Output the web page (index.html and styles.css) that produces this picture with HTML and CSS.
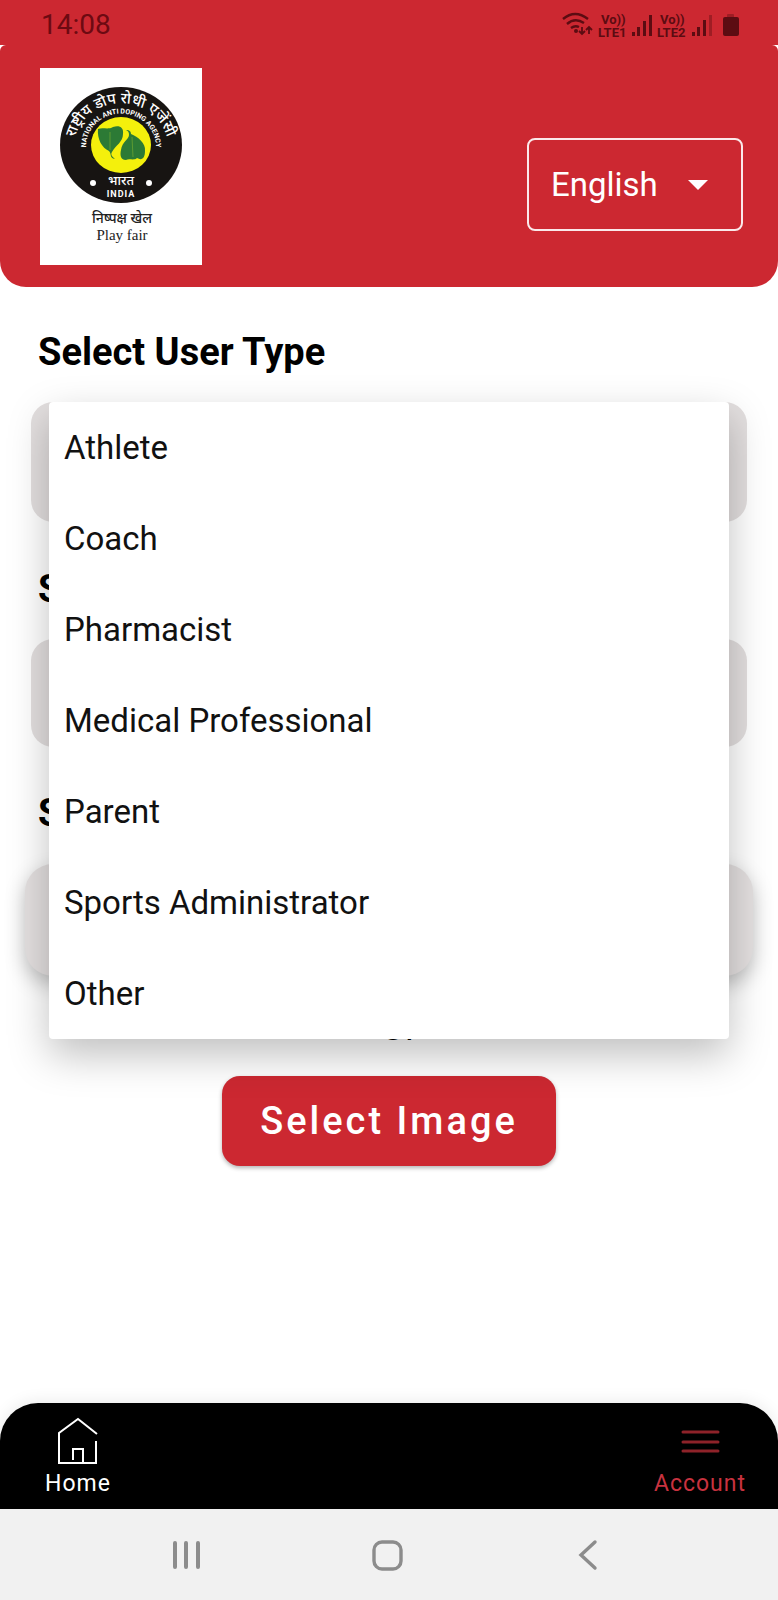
FILE: index.html
```html
<!DOCTYPE html>
<html lang="en">
<head>
    <meta charset="UTF-8">
    <meta name="viewport" content="width=device-width, initial-scale=1.0">
    <title>Select User Type</title>
    <link rel="stylesheet" href="styles.css">
</head>
<body>
    <!-- Status bar -->
    <div class="status-bar">
        <span class="time">14:08</span>
        <svg class="status-icons" width="180" height="28" viewBox="0 0 180 28">
            <g fill="none" stroke="#5c0c12" stroke-width="2.4">
                <path d="M1 8 Q13 -2 26 8"/>
                <path d="M5 13 Q13 6 22 12"/>
                <path d="M9 17 Q13 14 17 16"/>
            </g>
            <circle cx="14" cy="20" r="2" fill="#5c0c12"/>
            <path d="M20 16v7M17 20l3 3 3-3M27 23v-7M24 19l3-3 3 3" fill="none" stroke="#5c0c12" stroke-width="1.8"/>
            <g class="lte">
                <text x="39" y="13">Vo))</text>
                <text x="36" y="26">LTE1</text>
                <text x="98" y="13">Vo))</text>
                <text x="95" y="26">LTE2</text>
            </g>
            <g fill="#5c0c12">
                <rect x="70" y="21" width="3" height="4"/>
                <rect x="75" y="16" width="3" height="9"/>
                <rect x="81" y="10" width="3" height="15"/>
                <rect x="87" y="4" width="3" height="21"/>
                <rect x="130" y="21" width="3" height="4"/>
                <rect x="135" y="16" width="3" height="9"/>
                <rect x="141" y="9" width="3" height="16"/>
                <rect x="147" y="4" width="3" height="21" opacity=".4"/>
                <rect x="165" y="3" width="7" height="5" rx="1" opacity=".4"/>
                <rect x="161" y="6" width="16" height="19" rx="2"/>
            </g>
        </svg>
    </div>

    <!-- Header -->
    <header class="header">
        <svg class="logo" width="162" height="197" viewBox="0 0 162 197" role="img" aria-label="National Anti Doping Agency India">
            <defs>
                <path id="ringOuter" d="M36 92 A47 44 0 1 1 126 92"/>
                <path id="ringInner" d="M49 92 A35 33 0 1 1 113 92"/>
            </defs>
            <rect width="162" height="197" fill="#fff"/>
            <ellipse cx="81" cy="77" rx="61" ry="58" fill="#171412"/>
            <ellipse cx="81" cy="77" rx="30" ry="28" fill="#f4f00c"/>
            <path d="M58 61 C63 59 68 62 73 59 C79 57 84 59 83 66 C83 74 76 77 72 84 C70 87 73 89 75 91 C69 90 72 86 69 83 C62 80 57 71 58 61Z" fill="#2c7a35"/>
            <path d="M86 62 C90 62 91 64 91 66 C98 69 106 75 105 83 C105 90 102 93 97 90 C94 93 89 90 86 92 C80 92 80 86 81 82 C82 74 89 71 89 67 C89 64 88 63 86 62Z" fill="#2c7a35"/>
            <path d="M70 64 L70 82 M92 69 L93 89" stroke="#5c9a32" stroke-width="1" fill="none"/>
            <text class="logo-hindi" text-anchor="middle"><textPath href="#ringOuter" startOffset="50%">राष्ट्रीय डोप रोधी एजेंसी</textPath></text>
            <text class="logo-ring" text-anchor="middle"><textPath href="#ringInner" startOffset="50%">NATIONAL ANTI DOPING AGENCY</textPath></text>
            <text class="logo-bharat" x="81" y="117" text-anchor="middle">भारत</text>
            <text class="logo-india" x="81" y="129" text-anchor="middle">INDIA</text>
            <circle cx="53" cy="115" r="3" fill="#fff"/>
            <circle cx="109" cy="115" r="3" fill="#fff"/>
            <text class="logo-motto" x="82" y="155" text-anchor="middle">निष्पक्ष खेल</text>
            <text class="logo-play" x="82" y="172" text-anchor="middle">Play fair</text>
        </svg>
        <div class="language">
            <select class="language-select" aria-label="Language">
                <option>English</option>
                <option>Hindi</option>
            </select>
            <svg class="caret" width="20" height="10" viewBox="0 0 20 10"><path d="M0 0h20L10 10z" fill="#fff"/></svg>
        </div>
    </header>

    <!-- Form -->
    <main class="content">
        <label class="label" for="userType">Select User Type</label>
        <div class="field-wrap">
            <select class="field field-tall" id="userType"></select>
            <!-- Opened list -->
            <div class="menu" role="listbox" aria-label="User type">
                <button class="menu-item" role="option">Athlete</button>
                <button class="menu-item" role="option">Coach</button>
                <button class="menu-item" role="option">Pharmacist</button>
                <button class="menu-item" role="option">Medical Professional</button>
                <button class="menu-item" role="option">Parent</button>
                <button class="menu-item" role="option">Sports Administrator</button>
                <button class="menu-item" role="option">Other</button>
            </div>
        </div>

        <label class="label" for="state">S</label>
        <select class="field" id="state"></select>

        <label class="label" for="search">S</label>
        <input class="field field-raised" id="search" type="text">

        <p class="or">Or</p>
        <button class="btn">Select Image</button>
    </main>

    <!-- Bottom tabs -->
    <nav class="tabs">
        <a class="tab" href="#">
            <svg width="40" height="48" viewBox="0 0 40 48" fill="none" stroke="#fff" stroke-width="2">
                <path d="M39 17 L20 2 L1 16 V46 H38 V24"/>
                <path d="M15 43 V32 H25 V46"/>
            </svg>
            Home
        </a>
        <a class="tab tab-active" href="#">
            <svg width="40" height="48" viewBox="0 0 40 48" fill="none" stroke="#8e2229" stroke-width="3" stroke-linecap="round">
                <path d="M3 15H38M3 25H38M3 34H38"/>
            </svg>
            Account
        </a>
    </nav>

    <!-- System navigation -->
    <div class="system-nav">
        <button class="sys-btn" aria-label="Recents">
            <svg width="32" height="32" viewBox="0 0 32 32"><path d="M5 4V28M16 4V28M28 4V28" stroke="#8c8c8c" stroke-width="4" stroke-linecap="round"/></svg>
        </button>
        <button class="sys-btn" aria-label="Home screen">
            <svg width="32" height="32" viewBox="0 0 32 32"><rect x="3" y="3" width="27" height="27" rx="8" fill="none" stroke="#8c8c8c" stroke-width="3.4"/></svg>
        </button>
        <button class="sys-btn" aria-label="Back">
            <svg width="32" height="32" viewBox="0 0 32 32"><path d="M22 3L8 16L22 29" fill="none" stroke="#8c8c8c" stroke-width="3.4" stroke-linecap="round"/></svg>
        </button>
    </div>
</body>
</html>
```
FILE: styles.css
```css
* {
    box-sizing: border-box;
}
body {
    margin: 0;
    min-height: 100vh;
    display: flex;
    flex-direction: column;
    background-color: #fff;
    font-family: Roboto, sans-serif;
    color: #000;
}
button, select, input {
    font-family: inherit;
    border: none;
}
.status-bar {
    display: flex;
    justify-content: space-between;
    align-items: center;
    height: 45px;
    padding: 4px 36px 0 41px;
    background-color: #cc2831;
}
.time {
    font-size: 28px;
    line-height: 40px;
    color: #6d0a12;
}
.lte {
    font-size: 13px;
    font-weight: 700;
    fill: #5c0c12;
}
.header {
    display: flex;
    justify-content: space-between;
    align-items: flex-start;
    padding: 23px 35px 22px 40px;
    background-color: #cc2831;
    border-radius: 6px 6px 26px 26px;
}
.logo {
    display: block;
}
.logo-hindi, .logo-bharat, .logo-motto {
    font-family: "Noto Sans", "Noto Sans Devanagari", sans-serif;
    font-weight: 500;
    fill: #fff;
}
.logo-hindi {
    font-size: 15px;
}
.logo-bharat {
    font-size: 13px;
}
.logo-motto {
    font-size: 14px;
    fill: #222;
}
.logo-ring, .logo-india {
    font-family: Roboto, sans-serif;
    font-size: 7px;
    font-weight: 700;
    fill: #fff;
}
.logo-india {
    font-size: 9px;
    letter-spacing: 1px;
}
.logo-play {
    font-family: "Liberation Serif", serif;
    font-size: 15px;
    fill: #222;
}
.language {
    position: relative;
    width: 216px;
    margin-top: 70px;
}
.language-select {
    appearance: none;
    display: block;
    width: 100%;
    height: 93px;
    padding: 0 22px;
    border: 2px solid #fbe9ea;
    border-radius: 8px;
    background-color: transparent;
    color: #fff;
    font-size: 33px;
}
.caret {
    position: absolute;
    right: 35px;
    top: 42px;
    pointer-events: none;
}
.content {
    flex: 1;
    display: flex;
    flex-direction: column;
    padding: 41px 31px 0;
}
.label {
    padding: 0 7px;
    font-size: 38px;
    font-weight: 700;
    line-height: 48px;
}
.field-wrap {
    position: relative;
    margin: 26px 0 43px;
}
.field {
    appearance: none;
    display: block;
    width: 100%;
    height: 108px;
    margin: 26px 0 42px;
    border-radius: 22px;
    background-color: #e3dfdf;
}
.field-tall {
    height: 120px;
    margin: 0;
}
.field-raised {
    width: auto;
    height: 112px;
    margin: 27px -6px 28px;
    border-radius: 28px;
    box-shadow: 0 8px 20px rgba(0, 0, 0, 0.25);
}
.menu {
    position: absolute;
    top: 0;
    left: 18px;
    right: 18px;
    z-index: 1;
    border-radius: 4px;
    background-color: #fff;
    box-shadow: 0 16px 40px rgba(0, 0, 0, 0.25);
}
.menu-item {
    display: block;
    width: 100%;
    height: 91px;
    padding: 0 16px 0 15px;
    background-color: transparent;
    font-size: 33px;
    line-height: 40px;
    text-align: left;
    color: #111;
}
.or {
    margin: 0 0 24px;
    padding-left: 20px;
    font-size: 36px;
    line-height: 48px;
    text-align: center;
}
.btn {
    align-self: center;
    height: 90px;
    padding: 0 38px;
    border-radius: 18px;
    background-color: #cc2831;
    box-shadow: 0 2px 4px rgba(0, 0, 0, 0.3);
    color: #fff;
    font-size: 38px;
    font-weight: 500;
    letter-spacing: 3px;
}
.tabs {
    display: flex;
    justify-content: space-between;
    height: 106px;
    padding: 14px 32px 0 45px;
    border-radius: 38px 38px 0 0;
    background-color: #000;
    box-shadow: 0 -2px 16px rgba(0, 0, 0, 0.08);
}
.tab {
    display: flex;
    flex-direction: column;
    align-items: center;
    color: #fff;
    font-size: 23px;
    line-height: 38px;
    letter-spacing: 1px;
    text-decoration: none;
}
.tab-active {
    color: #c8323f;
}
.system-nav {
    display: flex;
    justify-content: space-evenly;
    align-items: center;
    height: 91px;
    padding-right: 4px;
    background-color: #f1f1f1;
}
.sys-btn {
    width: 32px;
    height: 32px;
    padding: 0;
    background-color: transparent;
}
```
